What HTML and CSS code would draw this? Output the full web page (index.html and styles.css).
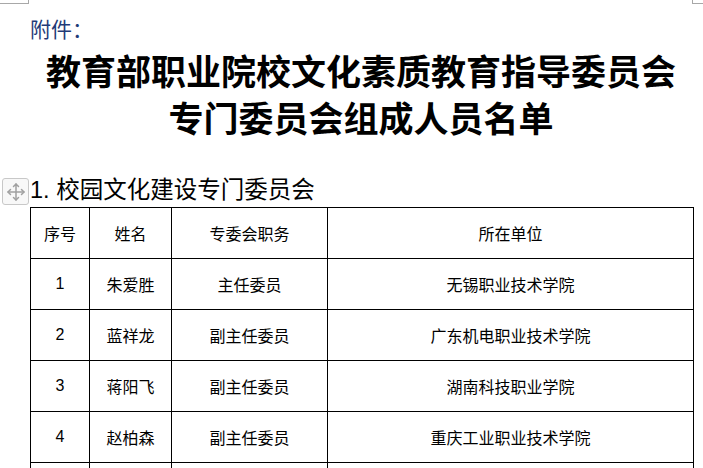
FILE: index.html
```html
<!DOCTYPE html>
<html lang="zh-CN">
<head>
<meta charset="utf-8">
<title>专门委员会组成人员名单</title>
<link rel="stylesheet" href="styles.css">
</head>
<body>
<div class="page">
  <span class="corner corner-left"></span>
  <span class="corner corner-right"></span>
  <p class="attach">附件：</p>
  <h1 class="title">教育部职业院校文化素质教育指导委员会<br>专门委员会组成人员名单</h1>
  <div class="section">
    <span class="move-handle">
      <svg width="22" height="22" viewBox="0 0 22 22" fill="none" stroke="#a0a0a0" stroke-width="1.5" stroke-linecap="round" stroke-linejoin="round">
        <path d="M11 3V19M3 11H19"/>
        <path d="M8.5 5.5L11 3L13.5 5.5M8.5 16.5L11 19L13.5 16.5M5.5 8.5L3 11L5.5 13.5M16.5 8.5L19 11L16.5 13.5"/>
      </svg>
    </span>
    <h2 class="section-title">1. 校园文化建设专门委员会</h2>
  </div>
  <table class="roster">
    <colgroup>
      <col class="c-no"><col class="c-name"><col class="c-role"><col class="c-unit">
    </colgroup>
    <thead>
      <tr><th>序号</th><th>姓名</th><th>专委会职务</th><th>所在单位</th></tr>
    </thead>
    <tbody>
      <tr><td>1</td><td>朱爱胜</td><td>主任委员</td><td>无锡职业技术学院</td></tr>
      <tr><td>2</td><td>蓝祥龙</td><td>副主任委员</td><td>广东机电职业技术学院</td></tr>
      <tr><td>3</td><td>蒋阳飞</td><td>副主任委员</td><td>湖南科技职业学院</td></tr>
      <tr><td>4</td><td>赵柏森</td><td>副主任委员</td><td>重庆工业职业技术学院</td></tr>
      <tr><td></td><td></td><td></td><td></td></tr>
    </tbody>
  </table>
</div>
</body>
</html>
```

FILE: styles.css
```css
html, body {
  margin: 0;
  padding: 0;
  background: #ffffff;
}

body {
  font-family: "Liberation Sans", "Noto Sans CJK SC", sans-serif;
  color: #000;
  overflow: hidden;
}

.page {
  position: relative;
  width: 662px;
  padding: 13px 11px 0 30px;
}

.corner {
  position: absolute;
  top: 0;
  height: 3px;
  border-bottom: 1px solid #a8a8a8;
}

.corner-left {
  left: 0;
  width: 28px;
  border-right: 1px solid #a8a8a8;
}

.corner-right {
  left: 692px;
  width: 11px;
  border-left: 1px solid #a8a8a8;
}

.attach {
  margin: 0;
  font-family: "Noto Sans CJK SC", sans-serif;
  font-size: 21px;
  line-height: 30px;
  color: #1f3b78;
  font-weight: 400;
}

.title {
  margin: 3px 0 0;
  font-family: "Noto Sans CJK SC", sans-serif;
  font-weight: 700;
  font-size: 35px;
  line-height: 47px;
  text-align: center;
}

.section {
  position: relative;
  margin-top: 36px;
}

.move-handle {
  position: absolute;
  left: -28px;
  top: 2px;
  width: 25px;
  height: 25px;
  border: 1px solid #c8c8c8;
  border-radius: 3px;
  background: #f8f8f8;
  display: flex;
  align-items: center;
  justify-content: center;
}

.section-title {
  margin: 0;
  font-family: "Liberation Sans", "Noto Sans CJK SC", sans-serif;
  font-weight: 400;
  font-size: 23.5px;
  line-height: 29px;
  letter-spacing: 0;
}

.roster {
  margin-top: 2px;
  width: 663px;
  border-collapse: collapse;
  table-layout: fixed;
  font-family: "Liberation Sans", "Noto Sans CJK SC", sans-serif;
  font-size: 16px;
}

.c-no { width: 59px; }
.c-name { width: 82px; }
.c-role { width: 156px; }
.c-unit { width: 366px; }

.roster th,
.roster td {
  border: 1px solid #000;
  height: 50px;
  padding: 0;
  text-align: center;
  vertical-align: middle;
  font-weight: 400;
}
```
